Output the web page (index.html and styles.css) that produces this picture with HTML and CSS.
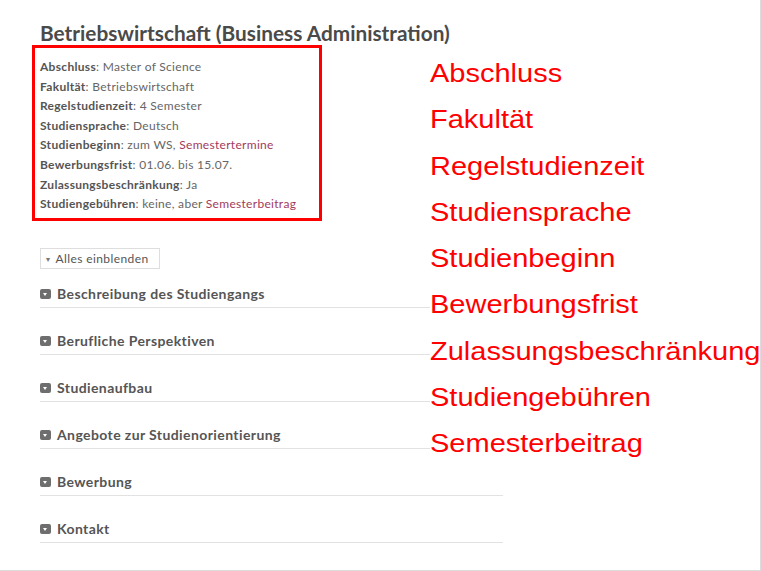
FILE: index.html
```html
<!DOCTYPE html>
<html lang="de">
<head>
  <meta charset="UTF-8">
  <title>Betriebswirtschaft (Business Administration)</title>
  <link rel="stylesheet" href="styles.css">
</head>
<body>
  <div class="page">
    <div class="content">
      <h1>Betriebswirtschaft (Business Administration)</h1>

      <div class="facts">
        <p><b>Abschluss</b>: Master of Science</p>
        <p><b>Fakultät</b>: Betriebswirtschaft</p>
        <p><b>Regelstudienzeit</b>: 4 Semester</p>
        <p><b>Studiensprache</b>: Deutsch</p>
        <p><b>Studienbeginn</b>: zum WS, <a href="#">Semestertermine</a></p>
        <p><b>Bewerbungsfrist</b>: 01.06. bis 15.07.</p>
        <p><b>Zulassungsbeschränkung</b>: Ja</p>
        <p><b>Studiengebühren</b>: keine, aber <a href="#">Semesterbeitrag</a></p>
      </div>

      <button class="expand-all"><span class="caret">&#9662;</span> Alles einblenden</button>

      <div class="sections">
        <div class="section"><span class="toggle"></span>Beschreibung des Studiengangs</div>
        <div class="section"><span class="toggle"></span>Berufliche Perspektiven</div>
        <div class="section"><span class="toggle"></span>Studienaufbau</div>
        <div class="section"><span class="toggle"></span>Angebote zur Studienorientierung</div>
        <div class="section"><span class="toggle"></span>Bewerbung</div>
        <div class="section"><span class="toggle"></span>Kontakt</div>
      </div>
    </div>

    <ul class="legend">
      <li>Abschluss</li>
      <li>Fakultät</li>
      <li>Regelstudienzeit</li>
      <li>Studiensprache</li>
      <li>Studienbeginn</li>
      <li>Bewerbungsfrist</li>
      <li>Zulassungsbeschränkung</li>
      <li>Studiengebühren</li>
      <li>Semesterbeitrag</li>
    </ul>
  </div>
</body>
</html>
```

FILE: styles.css
```css
body {
  margin: 0;
  background: #fff;
  font-family: Lato, "Open Sans", sans-serif;
  color: #666;
}
.page {
  box-sizing: border-box;
  width: 761px;
  height: 571px;
  border-right: 1px solid #dcdcdc;
  border-bottom: 1px solid #dcdcdc;
  padding-left: 40px;
  display: grid;
  grid-template-columns: 390px 73px auto;
  align-items: start;
  overflow: hidden;
}
.content {
  grid-column: 1 / 3;
  grid-row: 1;
}
h1 {
  margin: 20px 0 0;
  font-size: 20.8px;
  line-height: 25px;
  font-weight: 700;
  color: #4a4a4a;
  white-space: nowrap;
}
.facts {
  width: 279px;
  margin: 0 0 27px -8px;
  padding: 9px 0 4px 5px;
  border: 3px solid #f00;
}
.facts p {
  margin: 0;
  font-size: 12px;
  letter-spacing: 0.3px;
  line-height: 19.6px;
  color: #666;
  white-space: nowrap;
}
.facts b {
  color: #555;
}
.facts a {
  color: #a33a5c;
  text-decoration: none;
}
.expand-all {
  display: block;
  height: 21px;
  padding: 0 10px 0 5px;
  border: 1px solid #dedede;
  background: #fff;
  font-family: Lato, "Open Sans", sans-serif;
  font-size: 12px;
  letter-spacing: 0.4px;
  color: #555;
  cursor: pointer;
}
.caret {
  font-size: 8px;
  color: #777;
  vertical-align: 1px;
  margin-right: 2px;
}
.section {
  display: flex;
  align-items: center;
  gap: 6px;
  padding: 24px 0 4px;
  line-height: 18px;
  border-bottom: 1px solid #e2e2e2;
  font-size: 14px;
  letter-spacing: 0.4px;
  font-weight: 700;
  color: #555;
}
.section:first-child {
  padding-top: 16px;
}
.toggle {
  position: relative;
  width: 11px;
  height: 10px;
  border-radius: 2px;
  background: #6e6e6e;
  flex: none;
}
.toggle::after {
  content: "";
  position: absolute;
  left: 3px;
  top: 4px;
  border-left: 2.5px solid transparent;
  border-right: 2.5px solid transparent;
  border-top: 3px solid #fff;
}
.legend {
  grid-column: 2 / 4;
  grid-row: 1;
  list-style: none;
  margin: 50px 0 0;
  padding: 0;
  background: #fff;
  font-family: "Liberation Sans", Arial, sans-serif;
  font-size: 25px;
  line-height: 46.25px;
  color: #f00;
  white-space: nowrap;
  transform: scaleX(1.16);
  transform-origin: left top;
}
```
